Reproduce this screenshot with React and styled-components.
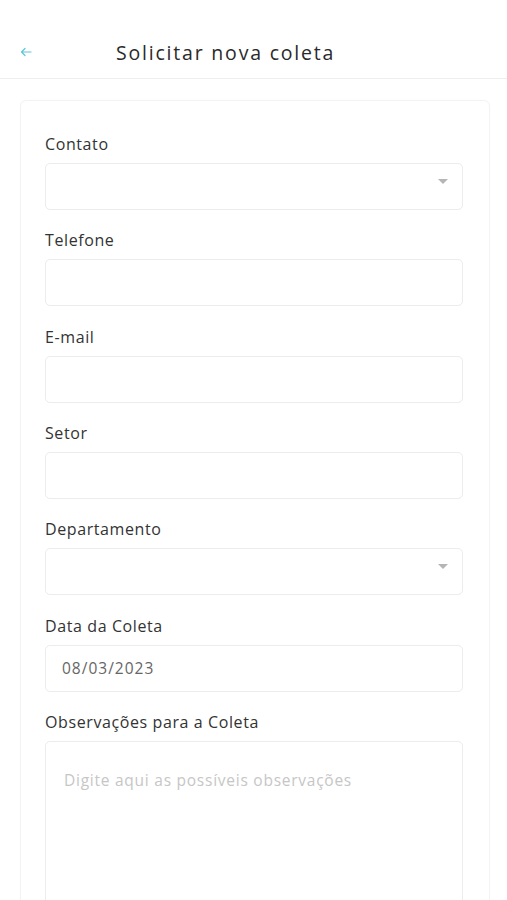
import React from "react";
import styled, { createGlobalStyle } from "styled-components";

const GlobalStyle = createGlobalStyle`
  html, body { margin: 0; padding: 0; background: #ffffff; }
  body { font-family: "Open Sans", "Noto Sans", sans-serif; color: #333; }
  * { box-sizing: border-box; }
`;

const Page = styled.div`
  width: 507px;
  min-height: 900px;
  background: #fff;
  overflow: hidden;
`;

const Header = styled.header`
  height: 79px;
  display: flex;
  align-items: center;
  border-bottom: 1px solid #eeeeee;
  padding-left: 18px;
  padding-top: 26px;
`;

const BackButton = styled.button`
  border: none;
  background: none;
  padding: 0;
  margin: 0;
  width: 16px;
  height: 16px;
  display: flex;
  align-items: center;
  justify-content: center;
  cursor: pointer;
`;

const Title = styled.h1`
  margin: 0 0 0 82px;
  font-size: 19.5px;
  font-weight: 400;
  letter-spacing: 1.8px;
  color: #2a2a2a;
`;

const Main = styled.main`
  padding: 21px 17px 0 20px;
`;

const Card = styled.div`
  border: 1px solid #f3f3f3;
  border-radius: 6px;
  padding: 33px 26px 0 24px;
  box-shadow: 0 0 3px rgba(0, 0, 0, 0.02);
  display: flex;
  flex-direction: column;
  gap: 20.33px;
`;

const Field = styled.div`
  display: flex;
  flex-direction: column;
  gap: 9px;
`;

const Label = styled.label`
  font-size: 16px;
  line-height: 20px;
  color: #333;
  letter-spacing: 0.6px;
`;

const Box = styled.div`
  position: relative;
  height: ${(p) => (p.$tall ? "170px" : "47px")};
  border: 1px solid #ececec;
  border-radius: 5px;
  background: #fff;
  display: flex;
  align-items: ${(p) => (p.$tall ? "flex-start" : "center")};
  padding: ${(p) => (p.$tall ? "27px 18px" : "0 16px")};
`;

const Value = styled.span`
  font-size: 15.5px;
  color: ${(p) => (p.$placeholder ? "#c6c6c6" : "#666")};
  letter-spacing: ${(p) => (p.$placeholder ? "0.75px" : "1px")};
`;

const Caret = styled.span`
  position: absolute;
  right: 14px;
  top: 15px;
  width: 0;
  height: 0;
  border-left: 5px solid transparent;
  border-right: 5px solid transparent;
  border-top: 5px solid #b5b5b5;
`;

const fields = [
  { label: "Contato", select: true },
  { label: "Telefone" },
  { label: "E-mail" },
  { label: "Setor" },
  { label: "Departamento", select: true },
  { label: "Data da Coleta", value: "08/03/2023" },
];

export default function App() {
  return (
    <Page>
      <GlobalStyle />
      <Header>
        <BackButton aria-label="Voltar">
          <svg width="12" height="10" viewBox="0 0 12 10" fill="none">
            <path d="M11 5H1.5M1.5 5L5 1.5M1.5 5L5 8.5" stroke="#5bc6d8" strokeWidth="1.2" strokeLinecap="round" strokeLinejoin="round" />
          </svg>
        </BackButton>
        <Title>Solicitar nova coleta</Title>
      </Header>
      <Main>
        <Card>
          {fields.map((f) => (
            <Field key={f.label}>
              <Label>{f.label}</Label>
              <Box>
                {f.value && <Value>{f.value}</Value>}
                {f.select && <Caret />}
              </Box>
            </Field>
          ))}
          <Field>
            <Label>Observações para a Coleta</Label>
            <Box $tall>
              <Value $placeholder>Digite aqui as possíveis observações</Value>
            </Box>
          </Field>
        </Card>
      </Main>
    </Page>
  );
}
